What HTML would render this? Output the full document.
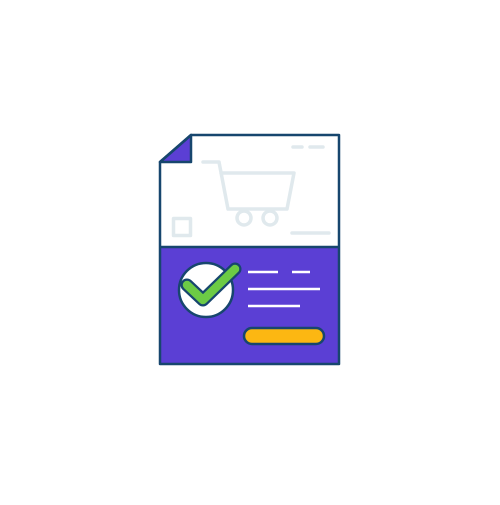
<!DOCTYPE html><html><head><style>body{margin:0;background:#fff}</style></head><body>
<svg width="500" height="500" viewBox="0 0 500 500" xmlns="http://www.w3.org/2000/svg">
<path d="M191 135H339V364H160V162Z" fill="#fff"/>
<rect x="160" y="247" width="179" height="117" fill="#5b3fd4"/>
<path d="M191 135V162H160Z" fill="#5b3fd4" stroke="#17466e" stroke-width="2.5" stroke-linejoin="round"/>
<path d="M191 135H339V364H160V162Z M160 247H339" fill="none" stroke="#17466e" stroke-width="2.5" stroke-linejoin="round"/>
<g stroke="#e0e9ed" stroke-width="3.5" fill="none" stroke-linecap="round" stroke-linejoin="round">
<path d="M203 162H219L228 209H287L294 173H221"/>
<circle cx="244" cy="218" r="7"/><circle cx="270" cy="218" r="7"/>
<path d="M293 147H302M310 147H323M292 233H329"/>
<rect x="173.5" y="218.5" width="17" height="17"/>
</g>
<circle cx="206" cy="290" r="27" fill="#fff" stroke="#17466e" stroke-width="2.5"/>
<path d="M187 285L203 300L235 269" fill="none" stroke="#17466e" stroke-width="13" stroke-linecap="round" stroke-linejoin="round"/>
<path d="M187 285L203 300L235 269" fill="none" stroke="#6ccb45" stroke-width="8.5" stroke-linecap="round" stroke-linejoin="round"/>
<g stroke="#fff" stroke-width="2.5"><path d="M248 272H278M292 272H310M248 289H320M248 306H300"/></g>
<rect x="244" y="328" width="80" height="16" rx="8" fill="#fcb712" stroke="#17466e" stroke-width="2.5"/>
</svg></body></html>
